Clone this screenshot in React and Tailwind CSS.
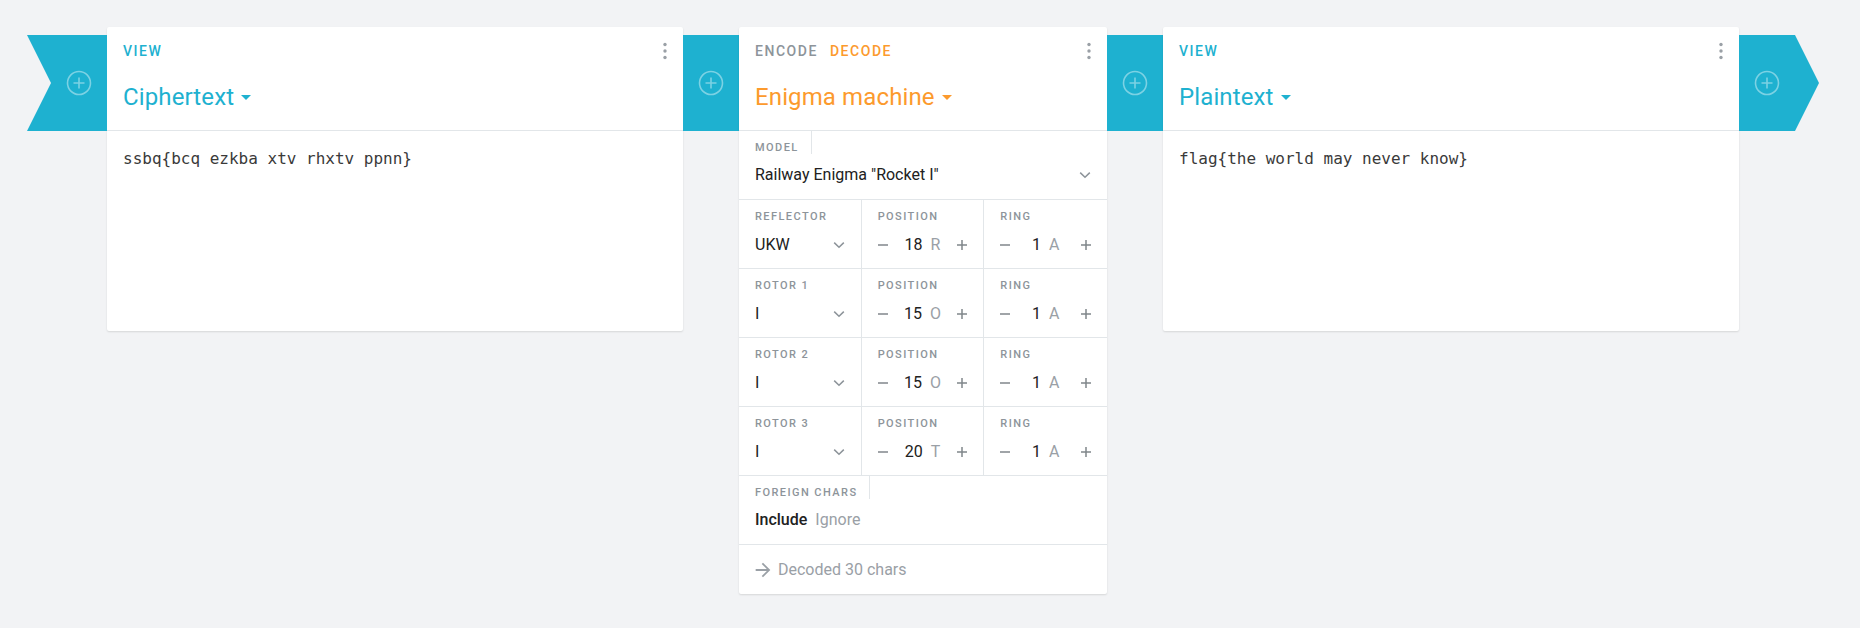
import React from 'react';

const CYAN = 'bg-[#1eb1d0]';

// Small plus-in-circle used on the pipeline ribbon
const AddIcon = () => (
  <svg width="26" height="26" viewBox="0 0 26 26" fill="none">
    <circle cx="13" cy="13" r="11.5" stroke="rgba(255,255,255,0.42)" strokeWidth="1.6" />
    <path d="M13 7.5v11M7.5 13h11" stroke="rgba(255,255,255,0.42)" strokeWidth="1.6" />
  </svg>
);

const Kebab = () => (
  <svg width="4" height="18" viewBox="0 0 4 18" className="shrink-0">
    <circle cx="2" cy="2.5" r="1.7" fill="#9aa0a6" />
    <circle cx="2" cy="9" r="1.7" fill="#9aa0a6" />
    <circle cx="2" cy="15.5" r="1.7" fill="#9aa0a6" />
  </svg>
);

const DropTriangle = ({ color }) => (
  <svg width="24" height="24" viewBox="0 0 24 24" className="shrink-0">
    <path d="M7 10l5 5 5-5z" fill={color} />
  </svg>
);

const Chevron = () => (
  <svg width="12" height="8" viewBox="0 0 12 8" fill="none" className="shrink-0">
    <path d="M1.2 1.6L6 6.3l4.8-4.7" stroke="#8d949a" strokeWidth="1.5" />
  </svg>
);

const Minus = () => (
  <svg width="10" height="10" viewBox="0 0 10 10" className="shrink-0">
    <path d="M0 5h10" stroke="#80868b" strokeWidth="1.5" />
  </svg>
);

const Plus = () => (
  <svg width="10" height="10" viewBox="0 0 10 10" className="shrink-0">
    <path d="M0 5h10M5 0v10" stroke="#80868b" strokeWidth="1.5" />
  </svg>
);

const Label = ({ children }) => (
  <div className="text-[11px] leading-[16px] font-medium tracking-[0.13em] text-[#8d949a] uppercase">
    {children}
  </div>
);

const Header = ({ color, tabs, title }) => (
  <div className="px-4 pt-[14px] pb-[17px] border-b border-[#e2e6e9]">
    <div className="flex items-center justify-between h-5">
      <div className="flex items-center gap-3 text-[14px] leading-5 font-medium tracking-[0.11em] uppercase">
        {tabs}
      </div>
      <Kebab />
    </div>
    <div className="mt-5 flex items-center h-8">
      <span className="text-[24px] leading-8 tracking-[0.005em]" style={{ color }}>{title}</span>
      <DropTriangle color={color} />
    </div>
  </div>
);

const Ribbon = ({ className = '' }) => (
  <div className={'shrink-0 mt-2 h-24 flex items-center ' + className}>
    <AddIcon />
  </div>
);

const TextCard = ({ label, title, text }) => (
  <div className="w-[576px] shrink-0 bg-white rounded-[2px] shadow-[0_1px_2px_rgba(0,0,0,0.12)]">
    <Header color="#1eb1d0" title={title} tabs={<span className="text-[#1eb1d0]">{label}</span>} />
    <div className="h-[200px] px-4 pt-4 font-['DejaVu_Sans_Mono',monospace] text-[16px] leading-6 text-[#3a3a3a]">
      {text}
    </div>
  </div>
);

const Stepper = ({ num, letter }) => (
  <div className="flex items-center justify-between h-6">
    <Minus />
    <div className="flex items-center">
      <span className="text-[#212121]">{num}</span>
      <span className="ml-2 text-[#9aa0a6]">{letter}</span>
    </div>
    <Plus />
  </div>
);

const rows = [
  { name: 'Reflector', value: 'UKW', pos: 18, posL: 'R' },
  { name: 'Rotor 1', value: 'I', pos: 15, posL: 'O' },
  { name: 'Rotor 2', value: 'I', pos: 15, posL: 'O' },
  { name: 'Rotor 3', value: 'I', pos: 20, posL: 'T' },
];

const Cell = ({ label, children, last }) => (
  <div className={'px-4 pt-[9px] pb-[11px] ' + (last ? '' : 'border-r border-[#e2e6e9]')}>
    <Label>{label}</Label>
    <div className="mt-2 text-[16px] leading-6">{children}</div>
  </div>
);

const TabLabel = ({ children }) => (
  <div className="flex">
    <div className="pt-[10px] pr-3 border-r border-[#e2e6e9]">
      <div className="text-[11px] leading-[13px] font-medium tracking-[0.13em] text-[#8d949a] uppercase">{children}</div>
    </div>
  </div>
);

const EnigmaCard = () => (
  <div className="w-[368px] shrink-0 bg-white rounded-[2px] shadow-[0_1px_2px_rgba(0,0,0,0.12)]">
    <Header
      color="#fc9a2d"
      title="Enigma machine"
      tabs={
        <>
          <span className="text-[#8d949a]">Encode</span>
          <span className="text-[#fc9a2d]">Decode</span>
        </>
      }
    />

    {/* Model */}
    <div className="px-4 pb-[12px] border-b border-[#e2e6e9] flex flex-col">
      <TabLabel>Model</TabLabel>
      <div className="mt-[9px] flex items-center justify-between text-[16px] leading-6 text-[#212121]">
        <span>Railway Enigma "Rocket I"</span>
        <Chevron />
      </div>
    </div>

    {/* Rotors */}
    {rows.map((r) => (
      <div key={r.name} className="grid grid-cols-3 border-b border-[#e2e6e9]">
        <Cell label={r.name}>
          <div className="flex items-center justify-between text-[#212121]">
            <span>{r.value}</span>
            <Chevron />
          </div>
        </Cell>
        <Cell label="Position">
          <Stepper num={r.pos} letter={r.posL} />
        </Cell>
        <Cell label="Ring" last>
          <Stepper num={1} letter="A" />
        </Cell>
      </div>
    ))}

    {/* Foreign chars */}
    <div className="px-4 pb-[12px] border-b border-[#e2e6e9] flex flex-col">
      <TabLabel>Foreign chars</TabLabel>
      <div className="mt-[9px] flex items-center gap-2 text-[16px] leading-6">
        <span className="text-[#212121] font-medium">Include</span>
        <span className="text-[#9aa0a6]">Ignore</span>
      </div>
    </div>

    {/* Status */}
    <div className="px-4 pt-[13px] pb-[12px] flex items-center text-[16px] leading-6 text-[#9aa0a6]">
      <svg width="22" height="22" viewBox="0 0 24 24" className="-ml-[3px] mr-[4px] shrink-0">
        <path d="M12 4l-1.41 1.41L16.17 11H4v2h12.17l-5.58 5.59L12 20l8-8z" fill="#9aa0a6" />
      </svg>
      <span>Decoded 30 chars</span>
    </div>
  </div>
);

const App = () => {
  return (
    <div className="min-h-screen w-full bg-[#f2f3f5] font-['Roboto',sans-serif]">
      <div className="flex items-start pl-[27px] pt-[27px]">
        {/* left ribbon tail */}
        <Ribbon className={CYAN + ' w-20 justify-end pr-[15px] [clip-path:polygon(0_0,100%_0,100%_100%,0_100%,24px_50%)]'} />
        <TextCard label="View" title="Ciphertext" text="ssbq{bcq ezkba xtv rhxtv ppnn}" />
        <Ribbon className={CYAN + ' w-14 justify-center'} />
        <EnigmaCard />
        <Ribbon className={CYAN + ' w-14 justify-center'} />
        <TextCard label="View" title="Plaintext" text="flag{the world may never know}" />
        {/* right ribbon head */}
        <Ribbon className={CYAN + ' w-20 justify-start pl-[15px] [clip-path:polygon(0_0,56px_0,100%_50%,56px_100%,0_100%)]'} />
      </div>
    </div>
  );
};

export default App;
